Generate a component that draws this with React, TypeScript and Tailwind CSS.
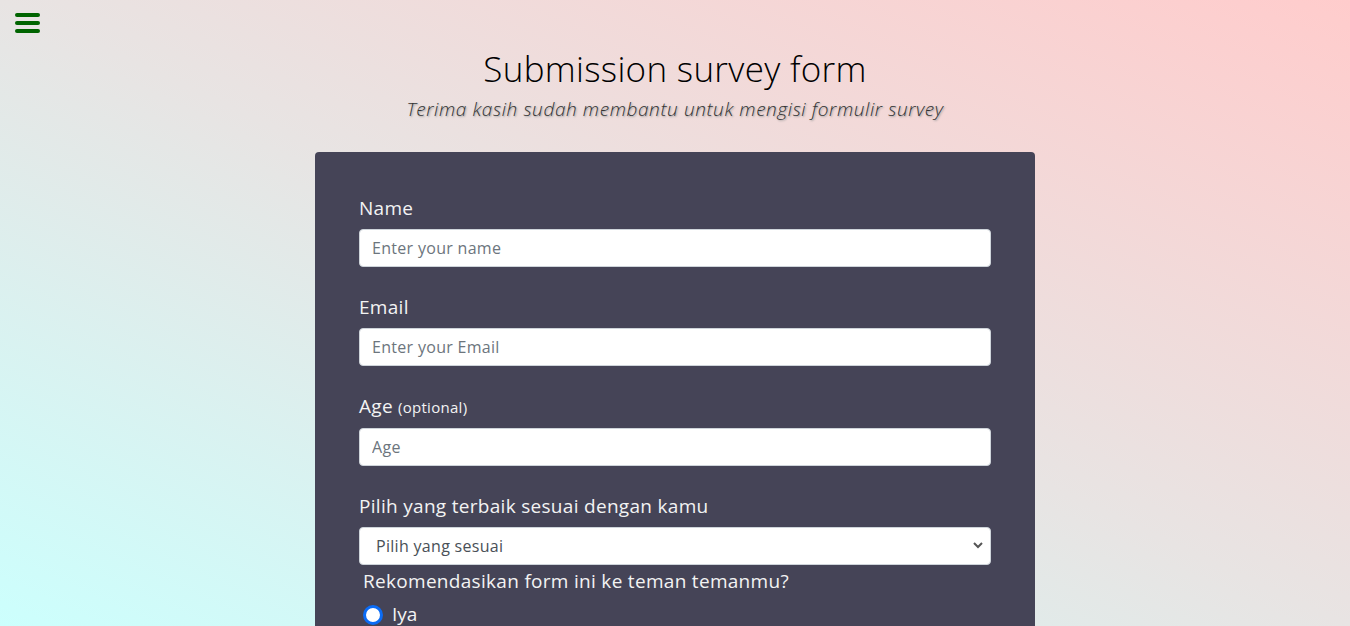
import { useState } from "react"

const font = { fontFamily: "'Open Sans', 'Noto Sans', sans-serif" }

function Field({ label, extra, placeholder }: { label: string; extra?: string; placeholder: string }) {
  return (
    <div className="mb-[27px]">
      <label className="block text-[19px] leading-[27px] font-medium tracking-[0.3px] text-[#f3f3f3] mb-[7px]">
        {label}
        {extra && <span className="text-[15px] ml-[5px]">{extra}</span>}
      </label>
      <input
        type="text"
        placeholder={placeholder}
        className="block w-full h-[38px] bg-white rounded-[4px] border border-[#ced4da] px-[12px] text-[16px] tracking-[0.3px] text-[#495057] placeholder:text-[#6c757d] outline-none"
      />
    </div>
  )
}

export default function App() {
  const [recommend, setRecommend] = useState(true)

  return (
    <div
      style={font}
      className="relative h-[626px] w-full overflow-hidden bg-[linear-gradient(to_top_right,#ccfffd_0%,#e8e4e3_50%,#ffcccc_100%)]"
    >
      {/* Menu toggle */}
      <button className="absolute left-[15px] top-[13px] flex flex-col gap-[4px]">
        <span className="block w-[25px] h-[4px] rounded-full bg-[#006400]" />
        <span className="block w-[25px] h-[4px] rounded-full bg-[#006400]" />
        <span className="block w-[25px] h-[4px] rounded-full bg-[#006400]" />
      </button>

      <header className="pt-[46px] text-center">
        <h1 className="text-[35px] leading-[46px] font-light tracking-[0.3px] text-black">Submission survey form</h1>
        <p className="mt-[4px] text-[19px] leading-[27px] italic font-light tracking-[0.6px] text-[#333] [text-shadow:1px_1px_2px_#9a9a9a]">
          Terima kasih sudah membantu untuk mengisi formulir survey
        </p>
      </header>

      <main className="mx-auto mt-[29px] w-[720px] rounded-[4px] bg-[#454457] px-[44px] pt-[43px] pb-[40px]">
        <Field label="Name" placeholder="Enter your name" />
        <Field label="Email" placeholder="Enter your Email" />
        <Field label="Age" extra="(optional)" placeholder="Age" />

        <div>
          <label className="block text-[19px] leading-[27px] font-medium tracking-[0.3px] text-[#f3f3f3] mb-[7px]">
            Pilih yang terbaik sesuai dengan kamu
          </label>
          <div className="relative">
            <select className="block w-full h-[38px] appearance-none bg-white rounded-[4px] border border-[#ced4da] pl-[16px] pr-[30px] text-[16px] tracking-[0.3px] text-[#495057] outline-none">
              <option>Pilih yang sesuai</option>
              <option>Mahasiswa</option>
              <option>Pekerja</option>
              <option>Lainnya</option>
            </select>
            <svg
              className="pointer-events-none absolute right-[8px] top-[15px]"
              width="10"
              height="7"
              viewBox="0 0 10 7"
              fill="none"
              stroke="#555"
              strokeWidth="2"
            >
              <path d="M1 1l4 4 4-4" />
            </svg>
          </div>
        </div>

        <p className="mt-[3px] ml-[4px] text-[19px] leading-[27px] font-medium tracking-[0.3px] text-[#f3f3f3]">
          Rekomendasikan form ini ke teman temanmu?
        </p>
        <label className="mt-[6px] ml-[4px] flex items-center gap-[9px] cursor-pointer">
          <span
            onClick={() => setRecommend(!recommend)}
            className={
              recommend
                ? "block w-[20px] h-[20px] rounded-full border-[3px] border-[#0b6cf6] bg-white"
                : "block w-[20px] h-[20px] rounded-full border border-[#767676] bg-white"
            }
          />
          <span className="text-[19px] leading-[27px] font-medium text-[#f3f3f3]">Iya</span>
        </label>
      </main>
    </div>
  )
}
